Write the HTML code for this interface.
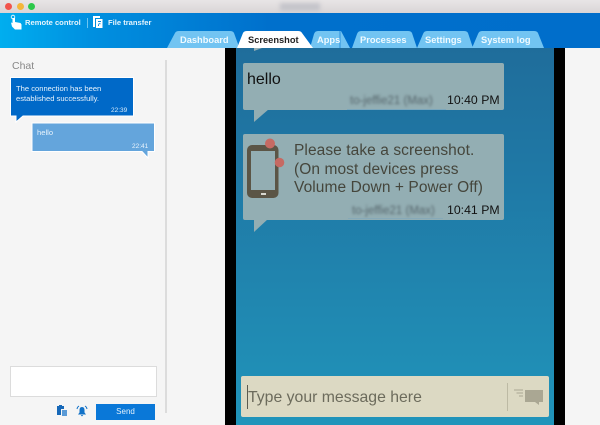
<!DOCTYPE html>
<html><head><meta charset="utf-8">
<style>
html,body{margin:0;padding:0}
body{width:600px;height:425px;overflow:hidden;position:relative;background:#f5f5f5;font-family:"Liberation Sans",sans-serif}
.a{position:absolute}
.t{position:absolute;white-space:nowrap}
.bub{position:absolute;left:243px;width:261px;background:#93aeb3;border-radius:2px}
</style></head><body>
<div class="a" style="left:0;top:0;width:600px;height:13px;background:linear-gradient(#e8e5e6,#d9d5d6)"></div>
<div class="a" style="left:280px;top:3px;width:40px;height:8px;background:#c4c4ca;filter:blur(2px)"></div>
<div class="a" style="left:5px;top:3px;width:7px;height:7px;border-radius:50%;background:#f2544c"></div>
<div class="a" style="left:17px;top:3px;width:7px;height:7px;border-radius:50%;background:#f4b63a"></div>
<div class="a" style="left:28px;top:3px;width:7px;height:7px;border-radius:50%;background:#2cc84a"></div>
<div class="a" style="left:0;top:13px;width:600px;height:35px;background:linear-gradient(90deg,#00aeef 0,#0090e0 90px,#0070cc 270px,#006ecb 600px)"></div>

<!-- toolbar -->
<svg class="a" style="left:9px;top:14px" width="17" height="16" viewBox="0 0 17 16"><circle cx="4" cy="3" r="1.8" fill="none" stroke="#fff" stroke-width=".8"/><path d="M3.5 4v5L2 8.5 3 12.5 6 15.5H12.5V10.5L11.5 9 6 8V4Z" fill="#fff"/></svg>
<div class="t" style="left:25px;top:18px;font-size:7.6px;line-height:10px;font-weight:bold;color:#e4f4fd">Remote control</div>
<div class="a" style="left:87px;top:18px;width:1px;height:10px;background:#6cc6f2"></div>
<svg class="a" style="left:92px;top:15px" width="13" height="14" viewBox="0 0 13 14"><path d="M1 1H8V3H3V12H1Z" fill="#fff"/><path d="M4 4H10.5V13H4Z" fill="#fff"/><path d="M6 6H9V7H6ZM6 8.2H8.5V9.2H6ZM6 8V11H7V8Z" fill="#0a88dc"/></svg>
<div class="t" style="left:108px;top:18px;font-size:7.6px;line-height:10px;font-weight:bold;color:#e4f4fd">File transfer</div>

<!-- tabs -->
<svg class="a" style="left:160px;top:28px" width="400" height="20" viewBox="160 28 400 20">
<path d="M167 48 L175 33 Q176 31 179 31 H230 Q233 31 234 33 L238 44 V48Z" fill="#72c4f2"/>
<path d="M310 48 L314 34 Q315 31 318 31 H341 L350 48Z" fill="#72c4f2"/>
<path d="M352 48 L357 34 Q358 31 361 31 H408 Q411 31 412 33 L417 48Z" fill="#72c4f2"/>
<path d="M417 48 L423 34 Q424 31 427 31 H464 Q467 31 468 33 L473 48Z" fill="#72c4f2"/>
<path d="M472 48 L478 34 Q479 31 482 31 H534 Q537 31 538 33 L544 48Z" fill="#72c4f2"/>
<path d="M340 31 V48" stroke="#2a8fdc" stroke-width="1"/>
<path d="M237 48 L243 33 Q244 31 247 31 H298 Q301 31 302 33 L313 48Z" fill="#fff"/>
</svg>
<div class="t" style="left:180px;top:35px;font-size:9.300px;line-height:11px;font-weight:bold;color:#f0faff">Dashboard</div>
<div class="t" style="left:248px;top:35px;font-size:9.300px;line-height:11px;font-weight:bold;color:#222">Screenshot</div>
<div class="t" style="left:317px;top:35px;font-size:9.300px;line-height:11px;font-weight:bold;color:#f0faff;width:23px;overflow:hidden">Apps</div>
<div class="t" style="left:360px;top:35px;font-size:9.300px;line-height:11px;font-weight:bold;color:#f0faff">Processes</div>
<div class="t" style="left:425px;top:35px;font-size:9.300px;line-height:11px;font-weight:bold;color:#f0faff">Settings</div>
<div class="t" style="left:481px;top:35px;font-size:9.300px;line-height:11px;font-weight:bold;color:#f0faff">System log</div>

<!-- left panel -->
<div class="t" style="left:12px;top:60px;font-size:10.500px;line-height:13px;color:#888">Chat</div>
<div class="a" style="left:165px;top:60px;width:2px;height:353px;background:#dcdcdc"></div>

<svg class="a" style="left:10px;top:77px" width="146" height="90" viewBox="10 77 146 90">
<path d="M10.500 77.500H133.500V116H23L16 122V116H10.500Z" fill="#0069c8" stroke="#fff" stroke-width="1"/>
<path d="M32 123H154.500V151.500H148V158L142 151.500H32Z" fill="#64a5dc" stroke="#fff" stroke-width="1"/>
</svg>
<div class="t" style="left:16px;top:84px;font-size:7.600px;line-height:9.500px;color:#e8f3fc">The connection has been<br>established successfully.</div>
<div class="t" style="left:111px;top:107px;font-size:6.500px;line-height:8px;color:#d8ebfa">22:39</div>
<div class="t" style="left:37px;top:128px;font-size:7.600px;line-height:9px;color:#e8f3fc">hello</div>
<div class="t" style="left:132px;top:143px;font-size:6.500px;line-height:8px;color:#e8f3fc">22:41</div>

<div class="a" style="left:10px;top:366px;width:145px;height:29px;background:#fff;border:1px solid #dcdcdc"></div>
<svg class="a" style="left:56px;top:404px" width="12" height="13" viewBox="0 0 12 13"><path d="M1 2H3V1H6V2H8V5H5V11H1Z" fill="#1668b8"/><path d="M6 6H11V12H6Z" fill="#5a9ad6"/></svg>
<svg class="a" style="left:76px;top:405px" width="12" height="12" viewBox="0 0 12 12"><path d="M6 2Q3.500 2 3.500 5V7.500L2 9.500H10L8.500 7.500V5Q8.500 2 6 2Z M4.800 10H7.200L6 11.500Z" fill="#1272c8"/><path d="M1 4Q1.300 2 3 1M11 4Q10.700 2 9 1" stroke="#1272c8" stroke-width="1" fill="none"/></svg>
<div class="a" style="left:96px;top:404px;width:59px;height:16px;background:#0a78d8;text-align:center;font-size:8px;line-height:16px;color:#e2f0fb">Send</div>

<!-- phone -->
<div class="a" style="left:225px;top:48px;width:340px;height:377px;background:#000"></div>
<div class="a" style="left:236px;top:48px;width:318px;height:377px;background:linear-gradient(#1f6d9b 0,#1f79a6 35%,#2088b1 70%,#2094ba 100%)"></div>
<svg class="a" style="left:250px;top:48px" width="16" height="4" viewBox="0 0 16 4"><path d="M4 0H12L4 3Z" fill="#93aeb3"/></svg>

<div class="bub" style="top:63px;height:47px"></div>
<svg class="a" style="left:243px;top:109px" width="40" height="15" viewBox="0 0 40 15"><path d="M11 0H26L11 13Z" fill="#93aeb3"/></svg>
<div class="t" style="left:247px;top:70px;font-size:16px;line-height:19px;color:#111">hello</div>
<div class="t" style="left:350px;top:94px;width:95px;font-size:11.500px;line-height:14px;color:#56666c;filter:blur(1.300px);overflow:hidden">to-jeffie21 (Max)</div>
<div class="a" style="left:347px;top:108.500px;width:99px;height:1px;background:#7ba7bd"></div>
<div class="t" style="left:447px;top:93px;font-size:12.300px;line-height:15px;color:#111">10:40 PM</div>

<div class="bub" style="top:134px;height:86px"></div>
<svg class="a" style="left:243px;top:219px" width="40" height="15" viewBox="0 0 40 15"><path d="M11 0H25L11 13Z" fill="#93aeb3"/></svg>
<svg class="a" style="left:245px;top:136px" width="44" height="64" viewBox="0 0 44 64">
<rect x="2" y="9" width="31.500" height="53" rx="5" fill="#5b5546"/>
<rect x="6" y="15" width="24" height="39" fill="#93aeb3"/>
<rect x="16" y="57" width="5" height="2" fill="#d8d8d0"/>
<circle cx="25" cy="7.500" r="5" fill="#c66a63"/>
<circle cx="34.500" cy="26.500" r="4.800" fill="#c66a63"/>
</svg>
<div class="t" style="left:294px;top:142px;font-size:15.500px;line-height:18.500px;color:#45463c;letter-spacing:.08px">Please take a screenshot.<br>(On most devices press<br>Volume Down + Power Off)</div>
<div class="t" style="left:352px;top:204px;width:90px;font-size:11.500px;line-height:14px;color:#56666c;filter:blur(1.300px);overflow:hidden">to-jeffie21 (Max)</div>
<div class="a" style="left:348px;top:217.500px;width:95px;height:1px;background:#86a9b8"></div>
<div class="t" style="left:447px;top:203px;font-size:12.300px;line-height:15px;color:#111">10:41 PM</div>

<!-- input -->
<div class="a" style="left:241px;top:376px;width:308px;height:41px;background:#dcd9c3;border-radius:2px"></div>
<div class="a" style="left:247px;top:385px;width:1px;height:24px;background:#5b5b50"></div>
<div class="t" style="left:248px;top:388px;font-size:15.800px;line-height:20px;color:#6c6b5c">Type your message here</div>
<div class="a" style="left:507px;top:383px;width:1px;height:28px;background:#bdbaa4"></div>
<svg class="a" style="left:514px;top:388px" width="32" height="18" viewBox="0 0 32 18"><path d="M0 2H9M2.500 5H9M5 8H9" stroke="#aaa793" stroke-width="1" fill="none"/><path d="M11 2H29V14H25V17L21 14H11Z" fill="#aaa793"/></svg>
</body></html>
